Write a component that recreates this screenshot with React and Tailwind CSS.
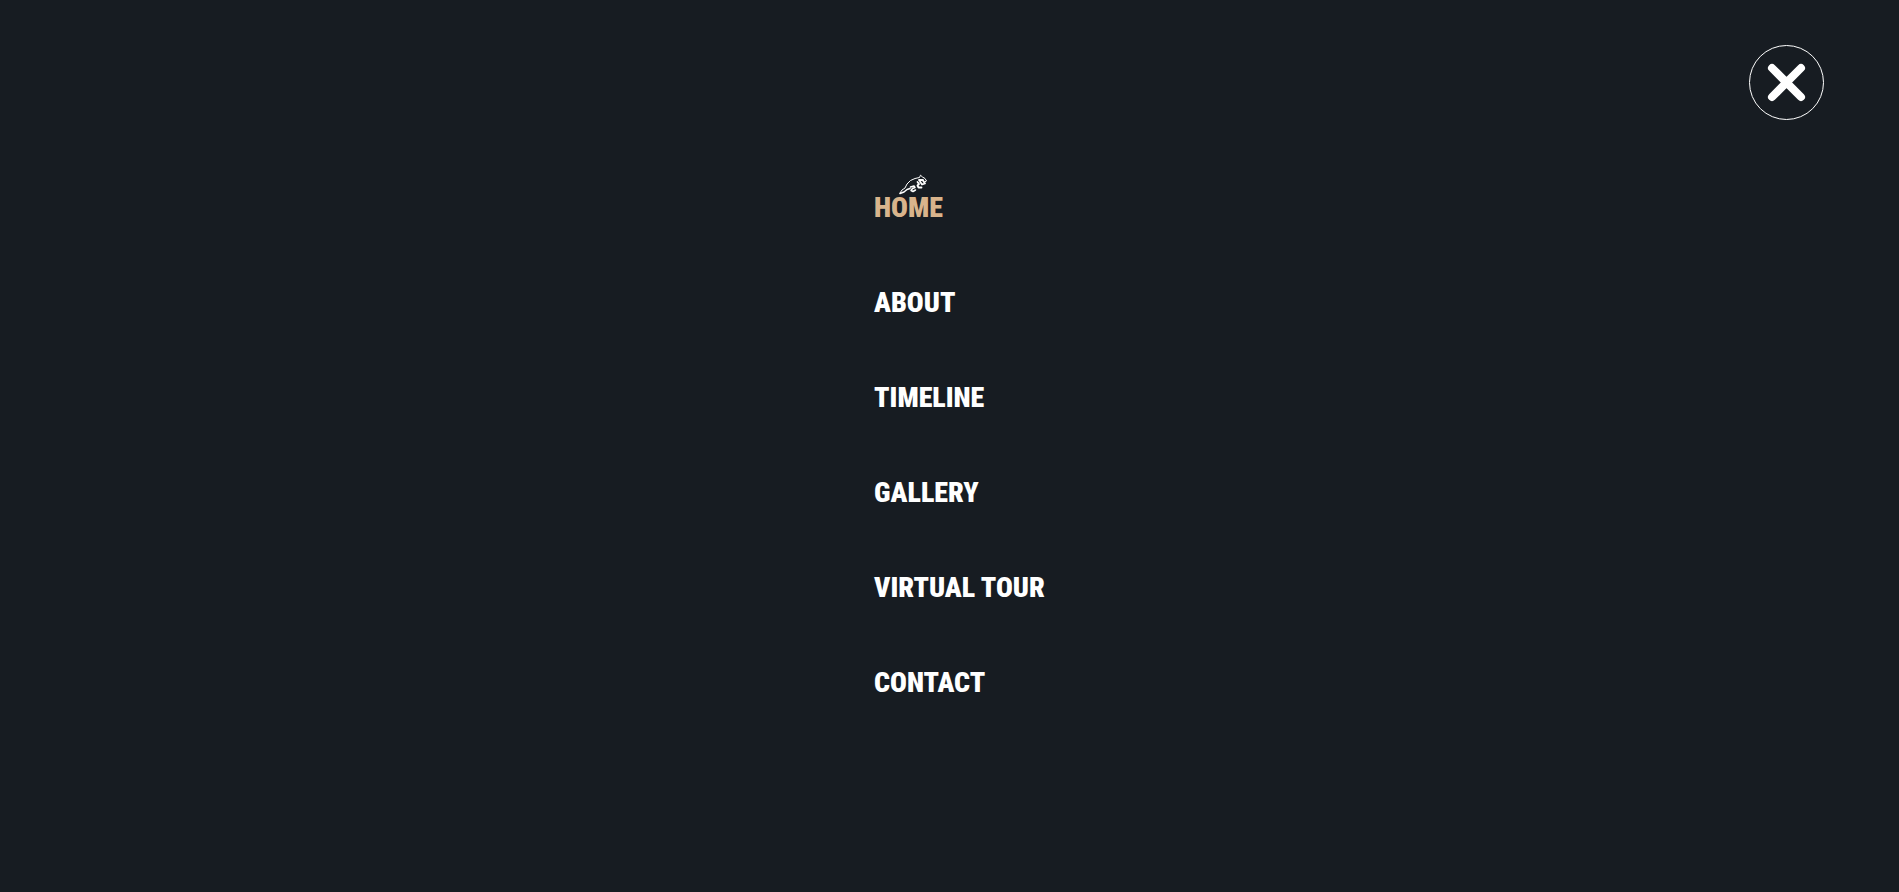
const items = ["Home", "About", "Timeline", "Gallery", "Virtual Tour", "Contact"];

function LeopardIcon() {
  return (
    <svg
      className="absolute bottom-full left-6 -mb-1 h-6 w-8 text-white"
      viewBox="0 0 32 24"
      fill="none"
      stroke="currentColor"
      strokeLinecap="round"
      strokeLinejoin="round"
      aria-hidden="true"
    >
      <path strokeWidth="1" d="M2 21 4 18 7 16 9 12 12.500 8.500 17 6.500 21.500 5.500 22.500 3.200 24.500 5 27 6.500 28.500 9 26.500 10" />
      <path strokeWidth="1.500" d="M2 21.500 6 20 9 17.500 12 16.500M12.500 15 16 14 17 15.500 14.500 16.500 13 18.500 15 19.500 17.500 18" />
      <path strokeWidth="1.800" d="M19.500 10 21 12 19.500 13.500 20.500 15.500 23.500 15.500M22 9.500 24 12.500 27 11.500 25 8.500M21 8 25 8" />
    </svg>
  );
}

export default function App() {
  return (
    <div className="flex min-h-screen flex-col bg-[#171c22] font-['Roboto_Condensed','Roboto',sans-serif]">
      <header className="flex justify-end pt-[45px] pr-[75px]">
        <button
          type="button"
          aria-label="Close menu"
          className="flex size-[75px] items-center justify-center rounded-full border border-white text-white"
        >
          <svg className="size-10" viewBox="0 0 40 40" stroke="currentColor" strokeWidth="8" strokeLinecap="round" aria-hidden="true">
            <path d="M5 5 34 34M34 5 5 34" />
          </svg>
        </button>
      </header>
      <nav aria-label="Main" className="mx-auto w-[151px] pt-10">
        <ul>
          {items.map((item, i) => (
            <li key={item} className="flex h-[95px] items-center">
              <a
                href="#"
                aria-current={i === 0 ? "page" : undefined}
                className={
                  i === 0
                    ? "relative text-[28px] leading-8 font-black whitespace-nowrap text-[#d9b48c] uppercase"
                    : "relative text-[28px] leading-8 font-black whitespace-nowrap text-white uppercase"
                }
              >
                {i === 0 && <LeopardIcon />}
                {item}
              </a>
            </li>
          ))}
        </ul>
      </nav>
    </div>
  );
}
